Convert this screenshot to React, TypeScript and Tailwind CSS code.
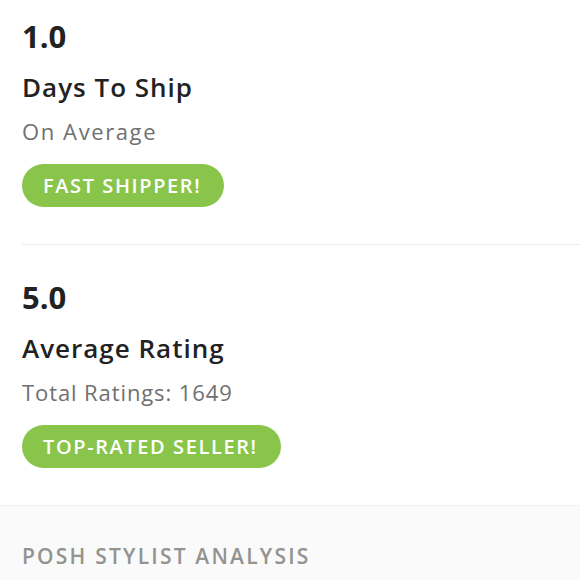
import React from "react";

export default function App() {
  const font = { fontFamily: "'Open Sans', sans-serif" };
  return (
    <div className="w-[580px] h-[580px] bg-white overflow-hidden" style={font}>
      <div className="pl-[22px]">
        <div className="pt-[16px] pb-[37px] border-b border-[#ececec]">
          <div className="text-[31px] leading-[40px] font-bold text-[#222]">1.0</div>
          <div className="mt-[15px] text-[26px] leading-[32px] font-semibold text-[#222] tracking-[1px]">Days To Ship</div>
          <div className="mt-[14px] text-[22px] leading-[28px] text-[#707070] tracking-[1.6px]">On Average</div>
          <div className="mt-[19px] inline-flex items-center h-[43px] pl-[21px] pr-[23px] rounded-full bg-[#89c54b] text-white text-[20px] font-semibold tracking-[1.6px]">
            FAST SHIPPER!
          </div>
        </div>
        <div className="pt-[32px] pb-[37px]">
          <div className="text-[31px] leading-[40px] font-bold text-[#222]">5.0</div>
          <div className="mt-[15px] text-[26px] leading-[32px] font-semibold text-[#222] tracking-[1px]">Average Rating</div>
          <div className="mt-[14px] text-[22px] leading-[28px] text-[#707070] tracking-[0.9px]">Total Ratings: 1649</div>
          <div className="mt-[19px] inline-flex items-center h-[43px] pl-[21px] pr-[23px] rounded-full bg-[#89c54b] text-white text-[20px] font-semibold tracking-[1.6px]">
            TOP-RATED SELLER!
          </div>
        </div>
      </div>
      <div className="border-t border-[#f0f0f0] bg-[#fafafa] h-[200px] pl-[22px] pt-[36px]">
        <div className="text-[21px] leading-[28px] font-semibold text-[#939390] tracking-[2.2px]">POSH STYLIST ANALYSIS</div>
      </div>
    </div>
  );
}
